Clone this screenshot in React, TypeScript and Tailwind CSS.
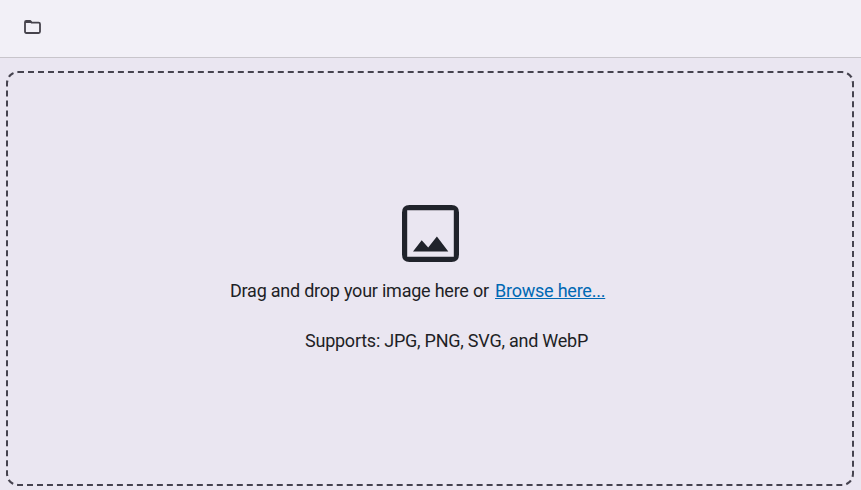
export default function App() {
  return (
    <div className="flex h-[490px] w-[861px] flex-col overflow-hidden bg-[#eae6f1] font-[Roboto,sans-serif] text-[#1e1f26]">
      <header className="flex h-[58px] shrink-0 items-start border-b border-[#c8c5cb] bg-[#f2f0f7] pt-[20px] pl-[24px]">
        <svg className="h-[14px] w-[17px]" viewBox="0 0 17 14" fill="none">
          <path d="M1 3V2.2Q1 1 2.2 1H6.4L7.6 2.6H14.6Q16 2.6 16 4V11.6Q16 13 14.6 13H2.4Q1 13 1 11.6V3Z" stroke="#46434c" strokeWidth="1.8" strokeLinejoin="round" />
          <path d="M1 1H7L8 3H1Z" fill="#46434c" />
        </svg>
      </header>
      <main className="mt-[13px] ml-[6px] h-[415px] w-[848px] rounded-[12px] border-2 border-dashed border-[#46434f]">
        <div className="pt-[132px] pl-[394px]">
          <svg className="block h-[57px] w-[57px]" viewBox="0 0 57 57" fill="#20232b">
            <path fillRule="evenodd" d="M7.5 0H49.5Q57 0 57 7.5V49.5Q57 57 49.5 57H7.5Q0 57 0 49.5V7.5Q0 0 7.5 0ZM5.2 5.2V51.8H51.8V5.2Z" />
            <path d="M11 46.5L19.7 35.2L26.2 42.6L34.9 31.5L46.3 46.5Z" />
          </svg>
        </div>
        <p className="mt-[17px] ml-[222px] text-[18px] leading-[24px] tracking-[-0.23px]">Drag and drop your image here or <a className="ml-[2px] text-[#0069b4] underline">Browse here...</a></p>
        <p className="mt-[26px] ml-[297px] text-[18px] leading-[24px] tracking-[-0.24px]">Supports: JPG, PNG, SVG, and WebP</p>
      </main>
    </div>
  );
}
